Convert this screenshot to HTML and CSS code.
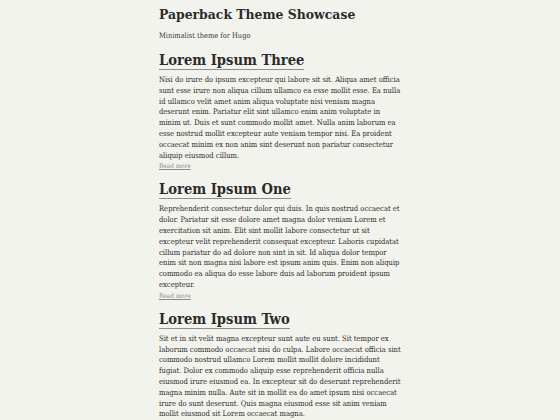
FILE: index.html
```html
<!DOCTYPE html>
<html lang="en">
<head>
<meta charset="utf-8">
<title>Paperback Theme Showcase</title>
<link rel="stylesheet" href="styles.css">
</head>
<body>
<div class="page">
  <header class="site-header">
    <h1 class="site-title">Paperback Theme Showcase</h1>
    <p class="site-desc">Minimalist theme for Hugo</p>
  </header>
  <main class="posts">
    <article class="post">
      <h2 class="post-title">Lorem Ipsum Three</h2>
      <p class="post-summary">Nisi do irure do ipsum excepteur qui labore sit sit. Aliqua amet officia sunt esse irure non aliqua cillum ullamco ea esse mollit esse. Ea nulla id ullamco velit amet anim aliqua voluptate nisi veniam magna deserunt enim. Pariatur elit sint ullamco enim anim voluptate in minim ut. Duis et sunt commodo mollit amet. Nulla anim laborum ea esse nostrud mollit excepteur aute veniam tempor nisi. Ea proident occaecat minim ex non anim sint deserunt non pariatur consectetur aliquip eiusmod cillum.</p>
      <a class="read-more" href="#">Read more</a>
    </article>
    <article class="post">
      <h2 class="post-title">Lorem Ipsum One</h2>
      <p class="post-summary">Reprehenderit consectetur dolor qui duis. In quis nostrud occaecat et dolor. Pariatur sit esse dolore amet magna dolor veniam Lorem et exercitation sit anim. Elit sint mollit labore consectetur ut sit excepteur velit reprehenderit consequat excepteur. Laboris cupidatat cillum pariatur do ad dolore non sint in sit. Id aliqua dolor tempor enim sit non magna nisi labore est ipsum anim quis. Enim non aliquip commodo ea aliqua do esse labore duis ad laborum proident ipsum excepteur.</p>
      <a class="read-more" href="#">Read more</a>
    </article>
    <article class="post">
      <h2 class="post-title">Lorem Ipsum Two</h2>
      <p class="post-summary">Sit et in sit velit magna excepteur sunt aute eu sunt. Sit tempor ex laborum commodo occaecat nisi do culpa. Labore occaecat officia sint commodo nostrud ullamco Lorem mollit mollit dolore incididunt fugiat. Dolor ex commodo aliquip esse reprehenderit officia nulla eiusmod irure eiusmod ea. In excepteur sit do deserunt reprehenderit magna minim nulla. Aute sit in mollit ea do amet ipsum nisi occaecat irure do sunt deserunt. Quis magna eiusmod esse sit anim veniam mollit eiusmod sit Lorem occaecat magna.</p>
      <a class="read-more" href="#">Read more</a>
    </article>
  </main>
</div>
</body>
</html>
```

FILE: styles.css
```css
html, body {
  margin: 0;
  padding: 0;
  background: #f3f3ee;
}
body {
  font-family: "DejaVu Serif", serif;
  font-stretch: condensed;
  color: #2b2b2b;
}
.page {
  width: 242px;
  margin: 0 auto;
  padding-top: 4px;
}
.site-title {
  margin: 0;
  font-size: 13.8px;
  line-height: 20px;
  font-weight: bold;
}
.site-desc {
  margin: 6px 0 0;
  font-size: 7.4px;
  line-height: 12px;
  color: #333;
}
.post {
  margin-top: 9px;
  display: flex;
  flex-direction: column;
  align-items: flex-start;
}
.post-title {
  margin: 0;
  font-size: 14.6px;
  line-height: 18px;
  font-weight: bold;
  border-bottom: 1px solid #8e8e8e;
}
.post-summary {
  margin: 5px 0 0;
  font-size: 7.55px;
  line-height: 10.8px;
}
.read-more {
  font-size: 6.4px;
  line-height: 10px;
  color: #8a8a8a;
}
```
